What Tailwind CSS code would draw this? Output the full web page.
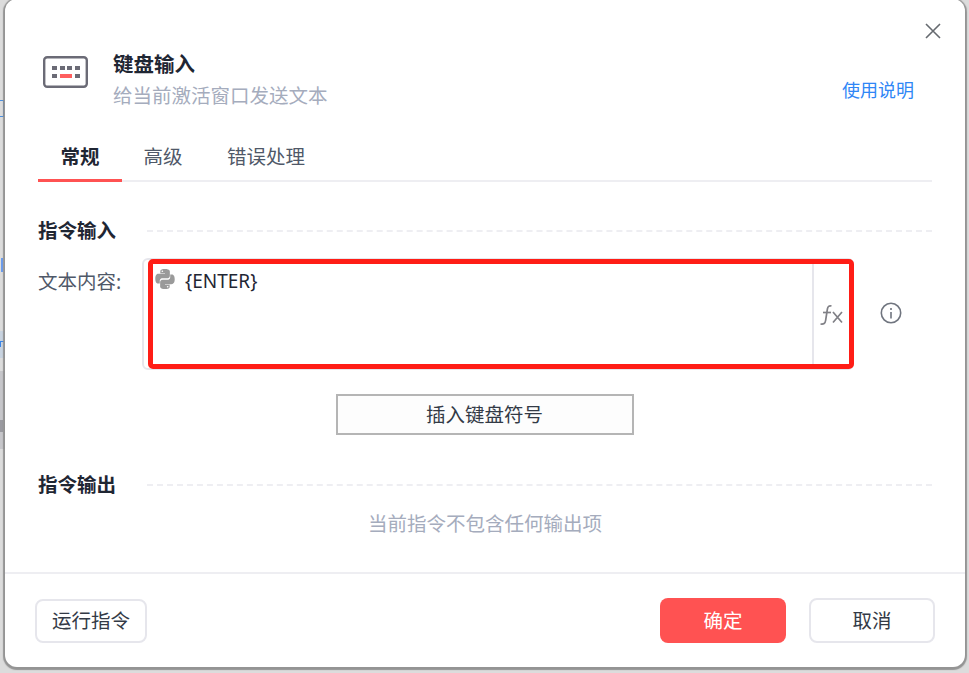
<!DOCTYPE html>
<html lang="zh"><head><meta charset="utf-8">
<script src="https://cdn.jsdelivr.net/npm/@tailwindcss/browser@4"></script>
</head>
<body class="m-0 w-[969px] h-[673px] overflow-hidden bg-[#dcdcdc] font-['Noto_Sans','Noto_Sans_CJK_SC',sans-serif]">
<div class="relative w-[969px] h-[673px] overflow-hidden">
  <div class="absolute left-0 top-[331px] w-[5px] h-[27px] bg-[#c8d3e0]"></div>
  <div class="absolute left-0 top-[371px] w-[5px] h-[78px] bg-[#c6c6ca]"></div>
  <div class="absolute left-0 top-[341px] w-[4px] h-[6px] border-t border-l border-[#3b86e8]"></div>
  <div class="absolute left-0 top-[100px] w-[4px] h-[17px] border-r border-y border-[#4a90e2]"></div>
  <div class="absolute left-[1px] top-[258px] w-[2px] h-[14px] bg-[#3b82f6]/70"></div>
  <div class="absolute left-0 top-[420px] w-[3px] h-[12px] bg-[#9a9aa0]"></div>
  <div class="relative ml-[5px] -mt-px w-[960px] h-[668px] bg-white rounded-xl shadow-[0_1px_1px_2px_rgba(140,140,140,0.9)] flex flex-col">
    <svg class="absolute right-[24px] top-[24px] w-[16px] h-[16px]" viewBox="0 0 16 16" fill="none" stroke="#666a70" stroke-width="1.6"><path d="M1 1L15 15M15 1L1 15"/></svg>
    <div class="flex items-start pt-[54px] pl-[38px] pr-[51px] h-[137px]">
      <svg class="w-[45px] h-[33px] mt-[3px]" viewBox="0 0 45 33" fill="none">
        <rect x="1.2" y="1.2" width="42.6" height="29.6" rx="3" stroke="#6b6b76" stroke-width="2.4"/>
        <g fill="#6b6b76"><rect x="9" y="10" width="5" height="4"/><rect x="17" y="10" width="5" height="4"/><rect x="24" y="10" width="5" height="4"/><rect x="32" y="10" width="5" height="4"/><rect x="9" y="18" width="5" height="4"/><rect x="32" y="18" width="5" height="4"/></g>
        <rect x="17" y="18" width="12" height="4" fill="#ff5f5f"/>
      </svg>
      <div class="ml-[25px] flex-1 -mt-[1px]">
        <div class="text-[20.5px] leading-[24px] font-bold text-[#1f2633]">键盘输入</div>
        <div class="mt-[7px] text-[19.5px] leading-[26px] text-[#a5acbd]">给当前激活窗口发送文本</div>
      </div>
      <a class="mt-[24px] text-[18px] leading-[26px] text-[#2f86f6]">使用说明</a>
    </div>
    <div class="flex mx-[33px] h-[46px] border-b-2 border-[#eeeef2] text-[19.5px] leading-[42px]">
      <div class="w-[84px] h-[46px] text-center font-bold text-[#1f2633] border-b-[3px] border-[#ff5252]">常规</div>
      <div class="w-[84px] text-center text-[#4f5868] -ml-[1px]">高级</div>
      <div class="ml-[22px] w-[78px] text-center text-[#4f5868] whitespace-nowrap">错误处理</div>
    </div>
    <div class="flex items-center ml-[33px] mr-[33px] mt-[36px] h-[26px]">
      <div class="text-[19.5px] leading-[26px] font-bold text-[#1f2633] whitespace-nowrap">指令输入</div>
      <div class="flex-1 ml-[31px] border-t-2 border-dashed border-[#eeeef2]"></div>
    </div>
    <div class="relative flex ml-[33px] mt-[14px] h-[112px]">
      <div class="w-[104px] pt-[11px] text-[19.5px] leading-[26px] text-[#4f5868] whitespace-nowrap">文本内容:</div>
      <div class="flex w-[712px] h-[112px] border-2 border-[#e6e6ec] rounded-md">
        <div class="flex flex-1 items-start pl-[10px] pt-[7px]">
          <svg class="w-[22px] h-[22px] mt-[1px]" viewBox="0 0 24 24" fill="#9a9a9a"><path d="M11.9 1C6.6 1 6.9 3.3 6.9 3.3v2.4H12v.7H4.9S1.4 6 1.4 11.6c0 5.500 3 5.300 3 5.300h1.900v-2.600s-.1-3 3-3h5.100s2.900 0 2.900-2.800V3.800S17.700 1 11.900 1zM9.100 2.600a.9.9 0 110 1.800.9.9 0 010-1.800z"/><path d="M12.100 23c5.300 0 5-2.300 5-2.300v-2.400H12v-.7h7.100s3.500.4 3.500-5.200c0-5.500-3-5.300-3-5.300h-1.900v2.600s.1 3-3 3H9.600s-2.900 0-2.900 2.800v4.700S6.300 23 12.100 23zm2.800-1.600a.9.9 0 110-1.800.9.9 0 010 1.800z"/></svg>
          <span class="ml-[9px] text-[19px] leading-[28px] text-[#1f2633]">{ENTER}</span>
        </div>
        <div class="w-[40px] border-l-2 border-[#e6e6ec] flex items-center justify-center">
          <svg class="w-[24px] h-[24px] -ml-[4px] mt-[2px]" viewBox="0 0 24 24" fill="none" stroke="#808086" stroke-width="1.7"><path d="M12.500 3C10 2.300 8.800 3.500 8.400 6L6.600 17.500C6.200 20.500 4.800 21.500 1.500 21"/><path d="M4 9.500H12"/><path d="M14 9L23 19.500M23 9L14 19.500"/></svg>
        </div>
      </div>
      <svg class="ml-[26px] mt-[44px] w-[22px] h-[22px]" viewBox="0 0 22 22" fill="none" stroke="#70757f" stroke-width="1.6"><circle cx="11" cy="11" r="9.700"/><path d="M11 10v6.500M11 6v2"/></svg>
      <div class="absolute left-[110px] top-[1px] w-[706px] h-[110px] border-[5px] border-[#ff1d16] rounded-[5px]"></div>
    </div>
    <div class="flex justify-center mt-[24px] ml-[-1px]">
      <button class="w-[298px] h-[41px] border-2 border-[#b5b5b5] bg-[#fdfdfd] text-[19.5px] text-[#333a46]">插入键盘符号</button>
    </div>
    <div class="flex items-center mx-[33px] mt-[37px] h-[26px]">
      <div class="text-[19.5px] leading-[26px] font-bold text-[#1f2633] whitespace-nowrap">指令输出</div>
      <div class="flex-1 ml-[31px] border-t-2 border-dashed border-[#eeeef2]"></div>
    </div>
    <div class="text-center mt-[13px] text-[19.5px] leading-[26px] text-[#a5acbd]">当前指令不包含任何输出项</div>
    <div class="mt-[35px] border-t-2 border-[#eeeef2] flex items-center justify-between pl-[30px] pr-[30px] pt-[24px]">
      <button class="w-[112px] h-[44px] border-2 border-[#e6e6ec] rounded-lg bg-white text-[19.5px] text-[#333a46]">运行指令</button>
      <div class="flex gap-[23px]">
        <button class="w-[126px] h-[45px] rounded-lg bg-[#ff5252] text-[19.5px] text-white">确定</button>
        <button class="w-[126px] h-[45px] border-2 border-[#e6e6ec] rounded-lg bg-white text-[19.5px] text-[#333a46]">取消</button>
      </div>
    </div>
  </div>
</div>
</body></html>
